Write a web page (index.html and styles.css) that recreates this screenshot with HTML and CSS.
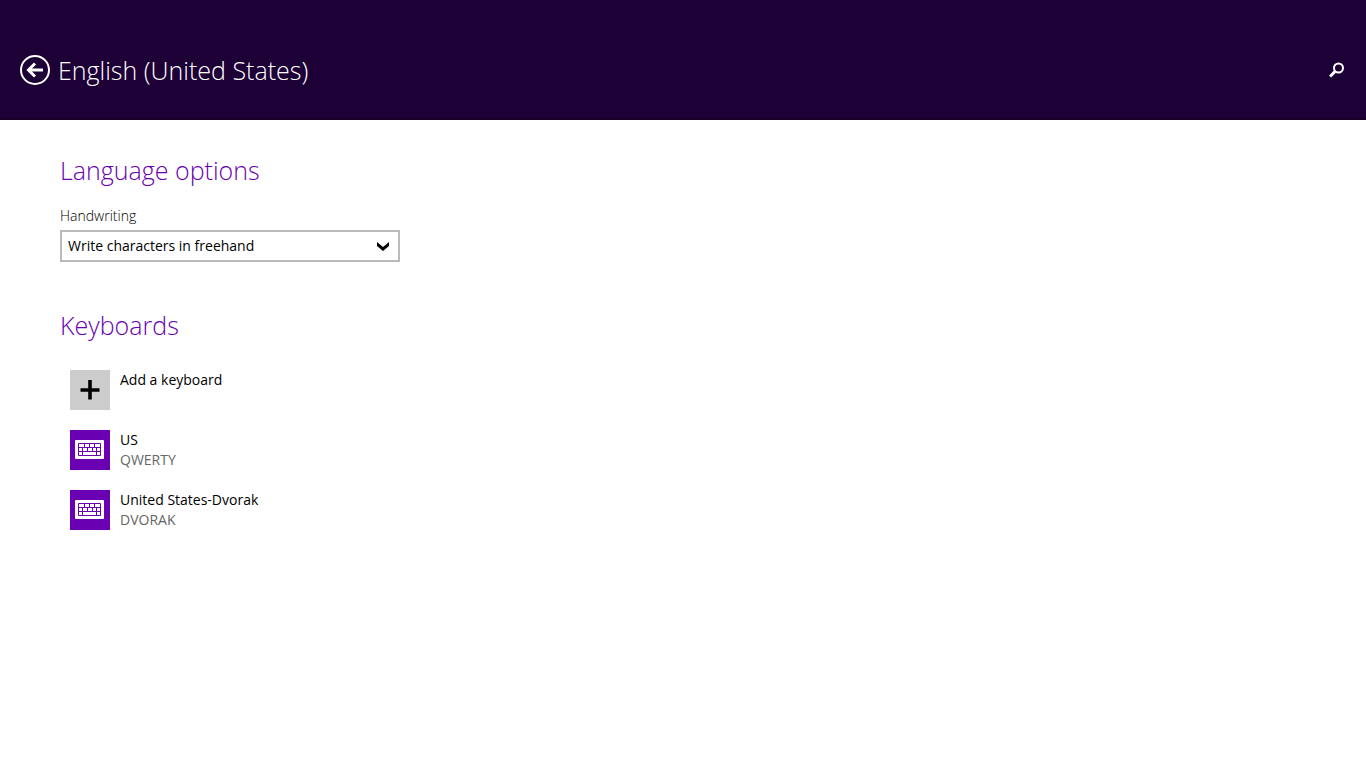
FILE: index.html
```html
<!DOCTYPE html>
<html lang="en">

<head>
    <meta charset="UTF-8">
    <title>English (United States)</title>
    <link rel="stylesheet" href="styles.css">
</head>

<body>
    <header class="topbar">
        <button class="icon-button" type="button" aria-label="Back">
            <svg width="30" height="30" viewBox="0 0 30 30" fill="none" stroke="#fff">
                <circle cx="15" cy="15" r="14" stroke-width="2" />
                <path d="M8.500 15H23" stroke-width="3" />
                <path d="M15 8.500L8.500 15l6.500 6.500" stroke-width="3" />
            </svg>
        </button>
        <h1>English (United States)</h1>
        <button class="icon-button search" type="button" aria-label="Search">
            <svg width="16" height="16" viewBox="0 0 16 16" fill="none" stroke="#fff">
                <circle cx="9.500" cy="6" r="4.500" stroke-width="2" />
                <path d="M6 9.500L1 14.500" stroke-width="3" />
            </svg>
        </button>
    </header>

    <main>
        <section class="options">
            <h2>Language options</h2>
            <label for="handwriting">Handwriting</label>
            <div class="select-box">
                <select id="handwriting">
                    <option>Write characters in freehand</option>
                </select>
                <svg class="arrow" width="14" height="10" viewBox="0 0 14 10">
                    <path d="M1 1l6 5 6-5v4L7 10 1 5z" />
                </svg>
            </div>
        </section>

        <section class="keyboards">
            <h2>Keyboards</h2>
            <ul>
                <li>
                    <button class="keyboard" type="button">
                        <svg class="tile add" width="40" height="40" viewBox="0 0 40 40">
                            <path d="M18.200 10h3.600v8.200H29.500v3.600h-7.700V29.500h-3.600v-7.700H10.500v-3.600h7.700z" />
                        </svg>
                        <span class="name">Add a keyboard</span>
                    </button>
                </li>
                <li>
                    <button class="keyboard" type="button">
                        <svg class="tile" width="40" height="40" viewBox="0 0 40 40">
                            <rect x="5" y="10" width="29" height="19" rx="1" fill="#fff" />
                            <path class="keys" d="M8.500 13.500h22v12h-22zM8.500 17.500h22M8.500 21.500h22M14.500 13.500v4M19.500 13.500v4M24.500 13.500v4M12.500 17.500v4M17.500 17.500v4M22.500 17.500v4M26.500 17.500v4M12.500 21.500v4M26.500 21.500v4" />
                        </svg>
                        <span class="name">US <small>QWERTY</small></span>
                    </button>
                </li>
                <li>
                    <button class="keyboard" type="button">
                        <svg class="tile" width="40" height="40" viewBox="0 0 40 40">
                            <rect x="5" y="10" width="29" height="19" rx="1" fill="#fff" />
                            <path class="keys" d="M8.500 13.500h22v12h-22zM8.500 17.500h22M8.500 21.500h22M14.500 13.500v4M19.500 13.500v4M24.500 13.500v4M12.500 17.500v4M17.500 17.500v4M22.500 17.500v4M26.500 17.500v4M12.500 21.500v4M26.500 21.500v4" />
                        </svg>
                        <span class="name">United States-Dvorak <small>DVORAK</small></span>
                    </button>
                </li>
            </ul>
        </section>
    </main>
</body>

</html>
```
FILE: styles.css
```css
* {
    box-sizing: border-box;
}

body {
    margin: 0;
    background-color: #fff;
    color: #000;
    font-family: 'Open Sans', 'Noto Sans', sans-serif;
    font-size: 14px;
    line-height: 20px;
}

button,
select {
    font: inherit;
    color: inherit;
    cursor: pointer;
}

svg {
    display: block;
}

h1,
h2 {
    margin: 0;
    font-size: 25px;
    font-weight: 300;
    line-height: 40px;
}

.topbar {
    display: flex;
    align-items: center;
    gap: 8px;
    height: 120px;
    padding: 22px 21px 0 20px;
    background-color: #1d0036;
    border-bottom: 2px solid #180029;
    color: #fff;
}

.icon-button {
    padding: 0;
    border: none;
    background: none;
}

.search {
    margin-left: auto;
}

main {
    padding: 30px 60px;
}

h2 {
    color: #6900b2;
}

.options label {
    display: block;
    margin: 16px 0 4px;
    font-weight: 300;
}

.select-box {
    display: grid;
    align-items: center;
    max-width: 340px;
}

.select-box select,
.arrow {
    grid-area: 1 / 1;
}

.select-box select {
    width: 100%;
    height: 32px;
    padding: 0 6px;
    border: 2px solid #bababa;
    border-radius: 0;
    background-color: #fff;
    appearance: none;
}

.arrow {
    justify-self: end;
    margin-right: 10px;
    pointer-events: none;
}

.keyboards {
    margin-top: 43px;
}

.keyboards ul {
    display: grid;
    gap: 20px;
    margin: 25px 0 0;
    padding: 0 10px;
    list-style: none;
}

.keyboard {
    display: flex;
    gap: 10px;
    padding: 0;
    border: none;
    background: none;
    text-align: left;
}

.tile {
    background-color: #6900b2;
}

.add {
    background-color: #ccc;
}

.keys {
    fill: none;
    stroke: #6900b2;
}

.name small {
    display: block;
    color: #666;
    font-size: 14px;
}
```
